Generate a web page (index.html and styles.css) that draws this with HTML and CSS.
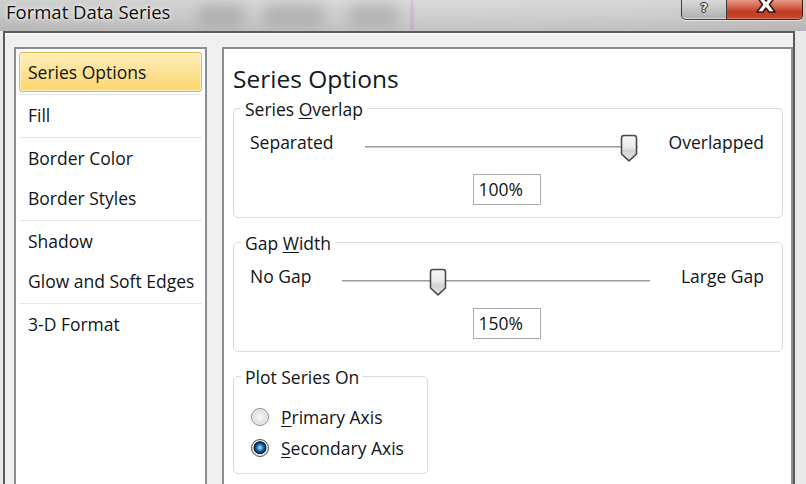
FILE: index.html
```html
<!DOCTYPE html>
<html>
<head>
<meta charset="utf-8">
<link rel="stylesheet" href="styles.css">
</head>
<body>
<div class="titlebar">
  <div class="title">Format Data Series</div>
  <span class="ghost g1"></span>
  <span class="ghost g2"></span>
  <span class="ghost g3"></span>
  <span class="streak"></span>
  <div class="caption">
    <div class="btn-help"><span class="help-glyph">?</span></div>
    <div class="btn-close">
      <svg class="close-x" width="26" height="20" viewBox="0 0 26 20">
        <path d="M4 -3 L10 -3 L13 1 L16 -3 L22 -3 L16.5 4.5 L22 12 L16 12 L13 8 L10 12 L4 12 L9.5 4.5 Z" fill="#ffffff" stroke="#3a1a14" stroke-width="1.6" stroke-linejoin="round"/>
      </svg>
    </div>
  </div>
</div>
<div class="frame">
  <div class="nav">
    <div class="item selected">Series Options</div>
    <div class="sep"></div>
    <div class="item">Fill</div>
    <div class="sep"></div>
    <div class="item">Border Color</div>
    <div class="item">Border Styles</div>
    <div class="sep"></div>
    <div class="item">Shadow</div>
    <div class="item">Glow and Soft Edges</div>
    <div class="sep"></div>
    <div class="item">3-D Format</div>
  </div>
  <div class="panel">
    <h1 class="heading">Series Options</h1>

    <div class="group">
      <div class="gtitle">Series <u>O</u>verlap</div>
      <div class="srow">
        <span class="slabel">Separated</span>
        <div class="slider">
          <div class="track"></div>
          <svg class="thumb" style="left: calc((100% - 18px) * 1)" width="18" height="28" viewBox="0 0 18 28">
            <defs>
              <linearGradient id="tg1" x1="0" y1="0" x2="0" y2="1">
                <stop offset="0" stop-color="#f6f6f6"/>
                <stop offset="0.45" stop-color="#ebebeb"/>
                <stop offset="0.62" stop-color="#d3d3d3"/>
                <stop offset="1" stop-color="#e4e4e4"/>
              </linearGradient>
            </defs>
            <path d="M1.5 4 Q1.5 1.5 4 1.5 L14 1.5 Q16.5 1.5 16.5 4 L16.5 20 L9 26.8 L1.5 20 Z" fill="url(#tg1)" stroke="#4a4a4a" stroke-width="1.6" stroke-linejoin="round"/>
          </svg>
        </div>
        <span class="slabel right">Overlapped</span>
      </div>
      <div class="val">100%</div>
    </div>

    <div class="group">
      <div class="gtitle">Gap <u>W</u>idth</div>
      <div class="srow">
        <span class="slabel">No Gap</span>
        <div class="slider">
          <div class="track"></div>
          <svg class="thumb" style="left: calc((100% - 18px) * 0.3)" width="18" height="28" viewBox="0 0 18 28">
            <defs>
              <linearGradient id="tg2" x1="0" y1="0" x2="0" y2="1">
                <stop offset="0" stop-color="#f6f6f6"/>
                <stop offset="0.45" stop-color="#ebebeb"/>
                <stop offset="0.62" stop-color="#d3d3d3"/>
                <stop offset="1" stop-color="#e4e4e4"/>
              </linearGradient>
            </defs>
            <path d="M1.5 4 Q1.5 1.5 4 1.5 L14 1.5 Q16.5 1.5 16.5 4 L16.5 20 L9 26.8 L1.5 20 Z" fill="url(#tg2)" stroke="#4a4a4a" stroke-width="1.6" stroke-linejoin="round"/>
          </svg>
        </div>
        <span class="slabel right">Large Gap</span>
      </div>
      <div class="val">150%</div>
    </div>

    <div class="group narrow">
      <div class="gtitle">Plot Series On</div>
      <div class="rrow first">
        <span class="radio"></span>
        <span class="rlabel"><u>P</u>rimary Axis</span>
      </div>
      <div class="rrow">
        <span class="radio checked"></span>
        <span class="rlabel"><u>S</u>econdary Axis</span>
      </div>
    </div>
  </div>
</div>
</body>
</html>
```
FILE: styles.css
```css
* { box-sizing: border-box; }

html, body { margin: 0; padding: 0; }

body {
  width: 806px;
  height: 484px;
  overflow: hidden;
  background: #e9e9e9;
  font-family: "Open Sans", "Noto Sans", sans-serif;
  font-size: 17.5px;
  color: #111418;
}

u {
  text-decoration-thickness: 1px;
  text-underline-offset: 2px;
}

/* ---------- title bar ---------- */
.titlebar {
  position: relative;
  height: 31px;
  display: flex;
  align-items: flex-start;
  background:
    linear-gradient(90deg, rgba(0,0,0,0.03) 0%, rgba(255,255,255,0.10) 55%, rgba(255,255,255,0.05) 80%, rgba(0,0,0,0.04) 100%),
    linear-gradient(#d6d6d6 0%, #c9c9c9 55%, #bcbcbc 100%);
  overflow: hidden;
}

.title {
  position: relative;
  z-index: 2;
  margin: 0 0 0 6px;
  font-size: 18.5px;
  line-height: 24px;
  color: #0c0c0c;
  text-shadow: 0 0 6px rgba(255,255,255,0.95), 0 0 3px rgba(255,255,255,0.9);
}

.ghost {
  position: absolute;
  top: 4px;
  height: 22px;
  border-radius: 8px;
  background: rgba(95, 95, 95, 0.22);
  filter: blur(6px);
}
.g1 { left: 198px; width: 46px; }
.g2 { left: 264px; width: 60px; }
.g3 { left: 349px; width: 50px; }

.streak {
  position: absolute;
  left: 411px;
  top: 0;
  width: 2px;
  height: 30px;
  background: rgba(170, 110, 180, 0.35);
  filter: blur(1px);
}

.caption {
  margin-left: auto;
  margin-right: 3px;
  display: flex;
  position: relative;
  z-index: 2;
}

.btn-help {
  width: 46px;
  height: 20px;
  border: 1px solid #3c3c3c;
  border-top: none;
  border-radius: 0 0 0 5px;
  background: linear-gradient(#dadada 0%, #c4c4c4 50%, #aeaeae 100%);
  box-shadow: inset 0 -1px 0 rgba(255,255,255,0.5), 0 1px 0 rgba(255,255,255,0.6);
  display: flex;
  justify-content: center;
  align-items: flex-start;
}

.help-glyph {
  margin-top: 1px;
  font-family: "DejaVu Sans", sans-serif;
  font-weight: bold;
  font-size: 13px;
  line-height: 14px;
  color: #e6e6e6;
  text-shadow: 0 0 1px #222, 1px 0 0 #333, -1px 0 0 #333, 0 1px 0 #333, 0 -1px 0 #333;
}

.btn-close {
  width: 76px;
  height: 20px;
  border: 1px solid #3e1a12;
  border-top: none;
  border-left: none;
  border-radius: 0 0 5px 0;
  background: linear-gradient(#e59a88 0%, #d35d45 40%, #c03b22 62%, #c64a32 100%);
  box-shadow: inset 0 -1px 0 rgba(255,200,180,0.4), 0 1px 0 rgba(255,255,255,0.6);
  display: flex;
  justify-content: center;
  overflow: hidden;
}

.close-x { display: block; margin-left: 3px; }

/* ---------- frame ---------- */
.frame {
  margin-left: 3px;
  width: 792px;
  height: 453px;
  border: 2px solid #5b5b5b;
  border-bottom: none;
  background: #f0f0f0;
  box-shadow: inset 0 1px 0 #fbfbfb;
  padding: 14px 0 0 9px;
  display: flex;
  gap: 15px;
}

/* ---------- nav list ---------- */
.nav {
  width: 193px;
  flex: none;
  background: #ffffff;
  border: 2px solid #8b8e95;
  border-bottom: none;
  padding: 3px 3px 0 3px;
}

.item {
  height: 40px;
  line-height: 38px;
  border: 1px solid transparent;
  border-radius: 3px;
  padding-left: 8px;
  white-space: nowrap;
}

.item.selected {
  border-color: #e2b34a;
  background: linear-gradient(#fef0b8 0%, #fde39a 45%, #fcd76c 100%);
  box-shadow: inset 0 0 0 1px rgba(255, 250, 225, 0.7);
}

.sep {
  height: 3px;
  border-bottom: 1px solid #e4e8ef;
}

/* ---------- panel ---------- */
.panel {
  flex: 1;
  background: #ffffff;
  border: 2px solid #8b8e95;
  border-bottom: none;
  padding: 13px 8px 0 9px;
}

.heading {
  margin: 0;
  font-size: 24.5px;
  line-height: 33px;
  font-weight: 400;
  color: #15181c;
}

.group {
  margin-top: 24px;
  border: 1px solid #d5dae3;
  border-radius: 5px;
  padding: 0 19px 12px 16px;
}

.heading + .group { margin-top: 13px; }

.group.narrow {
  width: 195px;
  padding-bottom: 14px;
}

.gtitle {
  width: fit-content;
  margin: -11px 0 0 -9px;
  padding: 0 4px;
  line-height: 22px;
  background: #ffffff;
}

.srow {
  display: flex;
  align-items: flex-start;
  margin-top: 11px;
}

.slabel {
  line-height: 22px;
  white-space: nowrap;
}

.slabel.right { margin-right: -1px; }

.slider {
  position: relative;
  flex: 1;
  height: 28px;
  margin: 3px 31px 0 31px;
}

.track {
  margin-top: 12px;
  height: 2px;
  background: linear-gradient(#9c9c9c 0 50%, #c9c9c9 50% 100%);
}

.thumb {
  position: absolute;
  top: 0;
  display: block;
}

.val {
  width: 68px;
  height: 31px;
  margin: 12px auto 0;
  border: 1px solid #a9acb3;
  padding-left: 5px;
  line-height: 29px;
}

/* ---------- radios ---------- */
.rrow {
  display: flex;
  align-items: center;
  gap: 12px;
  height: 22px;
  margin-top: 9px;
  padding-left: 1px;
}

.rrow.first { margin-top: 18px; }

.rlabel {
  line-height: 22px;
  white-space: nowrap;
}

.radio {
  width: 18px;
  height: 18px;
  flex: none;
  border-radius: 50%;
  border: 1px solid #8c8c8c;
  background: radial-gradient(circle at 50% 50%, #fafafa 0, #e6e6e6 45%, #cfcfcf 100%);
  box-shadow: inset 0 0 0 1px #f2f2f2;
}

.radio.checked {
  border-color: #4e4e4e;
  background: radial-gradient(circle at 50% 48%, #c8ecff 0, #58b0ea 1.6px, #1a6fb8 3.4px, #0b3560 5px, #1d2329 6.2px, #e2e2e2 6.8px, #d2d2d2 100%);
  box-shadow: inset 0 0 0 1px #efefef;
}
```
